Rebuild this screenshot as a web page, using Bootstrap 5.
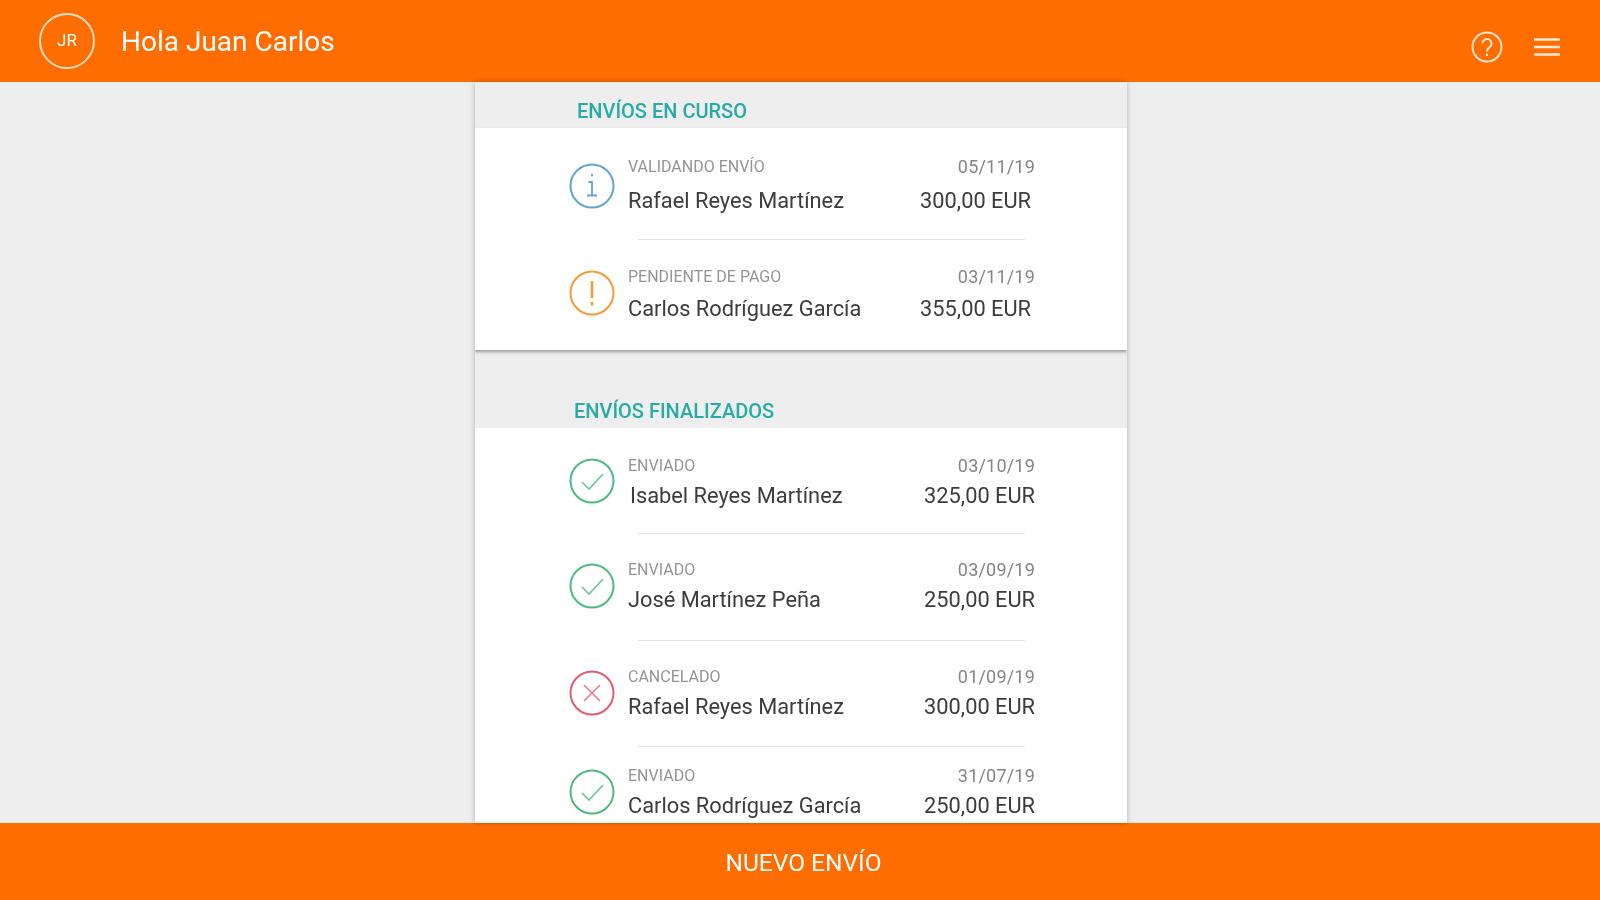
<!DOCTYPE html>
<html lang="es">
<head>
    <meta charset="UTF-8">
    <title>Envíos</title>
    <link href="https://cdn.jsdelivr.net/npm/bootstrap@5.3.0/dist/css/bootstrap.min.css" rel="stylesheet">
    <style>
        body { height: 100vh; overflow: hidden; background: #eeeeee; font-family: Roboto, "Liberation Sans", sans-serif; color: #3c3c3c; }
        .avatar, .hello, .top-icons, .panel, .bottom-text { filter: blur(.6px); }
        .top-bar { height: 82px; background: #ff6d00; color: #fff; padding: 0 40px 0 39px; }
        .avatar { width: 56px; height: 56px; border: 2px solid #ffdcc2; border-radius: 50%; font-size: 17px; margin-right: 26px; }
        .hello { font-size: 28px; padding-top: 1px; }
        .top-icons { gap: 31px; padding-top: 12px; }
        .panel { width: 652px; min-height: 0; margin-left: 475px; background: #eeeeee; box-shadow: 0 0 5px rgba(0, 0, 0, .28); }
        .sec-title { height: 46px; color: #26aca4; font-size: 20px; font-weight: 500; padding: 14px 0 0 102px; }
        .sec-title-2 { height: 78px; padding: 46px 0 0 99px; }
        .sec-card { background: #fff; }
        .sec-card-1 { box-shadow: 0 2px 3px rgba(0, 0, 0, .35); }
        .ship-row { padding: 0 92px 0 94px; }
        .ship-h1 { height: 111px; padding-top: 4px; }
        .ship-h2 { height: 110px; }
        .ship-h3 { height: 106px; }
        .ship-h4 { height: 105px; }
        .ship-h5 { height: 92px; }
        .ship-sep { height: 1px; background: #e0e0e0; margin: 0 102px 0 163px; }
        .ship-label { font-size: 16px; color: #949494; line-height: 18px; }
        .ship-date { font-size: 18px; color: #858585; line-height: 20px; letter-spacing: .2px; }
        .ship-name { font-size: 21.8px; line-height: 28px; margin-top: 6px; }
        .ship-name-wide { margin-top: 10px; }
        .ship-name-mid { margin-top: 8px; }
        .ship-name-in { padding-left: 2px; }
        .ship-text-low { padding-top: 4px; }
        .status-icon { width: 46px; height: 46px; margin-right: 13px; }
        .status-up { margin-bottom: 4px; }
        .status-up-sm { margin-bottom: 2px; }
        .bottom-bar { height: 77px; background: #ff6d00; color: #fff; font-size: 24.5px; padding: 3px 0 0 7px; }
    </style>
</head>
<body class="d-flex flex-column">

<svg width="0" height="0" class="position-absolute">
    <symbol id="i-ok" viewBox="0 0 46 46"><circle cx="23" cy="23" r="21.5" fill="none" stroke="#4dbb7f" stroke-width="2"/><path d="M13 24l7 7 14-15" fill="none" stroke="#6cc796" stroke-width="1.6"/></symbol>
    <symbol id="i-no" viewBox="0 0 46 46"><circle cx="23" cy="23" r="21.5" fill="none" stroke="#e8596b" stroke-width="2"/><path d="M15 15l16 16M31 15l-16 16" fill="none" stroke="#ee7c8a" stroke-width="1.6"/></symbol>
    <symbol id="i-info" viewBox="0 0 46 46"><circle cx="23" cy="23" r="21.5" fill="none" stroke="#5fa6cb" stroke-width="2"/><path d="M19.500 19h3.500v13M18 32.500h10M23 11v2.500" fill="none" stroke="#5fa6cb" stroke-width="1.800"/></symbol>
    <symbol id="i-warn" viewBox="0 0 46 46"><circle cx="23" cy="23" r="21.5" fill="none" stroke="#f59a35" stroke-width="2"/><path d="M23 11v17M23 32v3.500" fill="none" stroke="#f59a35" stroke-width="2.600"/></symbol>
</svg>

<header class="top-bar d-flex align-items-center flex-shrink-0">
    <div class="avatar d-flex align-items-center justify-content-center">JR</div>
    <div class="hello">Hola Juan Carlos</div>
    <div class="top-icons d-flex align-items-center ms-auto">
        <svg width="32" height="32" viewBox="0 0 32 32" fill="none" stroke="#ffe3cf" stroke-width="2"><circle cx="16" cy="16" r="14.500"/><path d="M11.500 12.500a4.500 4.500 0 1 1 7 3.700c-1.700 1.200-2.500 2-2.500 4.300M16 22.500v2.500"/></svg>
        <svg width="26" height="20" viewBox="0 0 26 20" fill="none" stroke="#ffe9da" stroke-width="2.600"><path d="M0 2.500h26M0 10h26M0 17.500h26"/></svg>
    </div>
</header>

<main class="panel me-auto flex-grow-1 overflow-hidden">
    <div class="sec-title">ENVÍOS EN CURSO</div>
    <div class="sec-card sec-card-1">
        <div class="ship-row ship-h1 d-flex align-items-center">
            <svg class="status-icon"><use href="#i-info"/></svg>
            <div class="flex-grow-1">
                <div class="d-flex justify-content-between align-items-center"><span class="ship-label">VALIDANDO ENVÍO</span><span class="ship-date">05/11/19</span></div>
                <div class="d-flex justify-content-between ship-name ship-name-wide"><span>Rafael Reyes Martínez</span><span class="pe-1">300,00 EUR</span></div>
            </div>
        </div>
        <div class="ship-sep"></div>
        <div class="ship-row ship-h2 d-flex align-items-center">
            <svg class="status-icon status-up"><use href="#i-warn"/></svg>
            <div class="flex-grow-1">
                <div class="d-flex justify-content-between align-items-center"><span class="ship-label">PENDIENTE DE PAGO</span><span class="ship-date">03/11/19</span></div>
                <div class="d-flex justify-content-between ship-name ship-name-mid"><span>Carlos Rodríguez García</span><span class="pe-1">355,00 EUR</span></div>
            </div>
        </div>
    </div>
    <div class="sec-title sec-title-2">ENVÍOS FINALIZADOS</div>
    <div class="sec-card">
        <div class="ship-row ship-h4 d-flex align-items-center">
            <svg class="status-icon"><use href="#i-ok"/></svg>
            <div class="flex-grow-1 ship-text-low">
                <div class="d-flex justify-content-between align-items-center"><span class="ship-label">ENVIADO</span><span class="ship-date">03/10/19</span></div>
                <div class="d-flex justify-content-between ship-name"><span class="ship-name-in">Isabel Reyes Martínez</span><span>325,00 EUR</span></div>
            </div>
        </div>
        <div class="ship-sep"></div>
        <div class="ship-row ship-h3 d-flex align-items-center">
            <svg class="status-icon status-up-sm"><use href="#i-ok"/></svg>
            <div class="flex-grow-1">
                <div class="d-flex justify-content-between align-items-center"><span class="ship-label">ENVIADO</span><span class="ship-date">03/09/19</span></div>
                <div class="d-flex justify-content-between ship-name"><span>José Martínez Peña</span><span>250,00 EUR</span></div>
            </div>
        </div>
        <div class="ship-sep"></div>
        <div class="ship-row ship-h4 d-flex align-items-center">
            <svg class="status-icon status-up-sm"><use href="#i-no"/></svg>
            <div class="flex-grow-1">
                <div class="d-flex justify-content-between align-items-center"><span class="ship-label">CANCELADO</span><span class="ship-date">01/09/19</span></div>
                <div class="d-flex justify-content-between ship-name"><span>Rafael Reyes Martínez</span><span>300,00 EUR</span></div>
            </div>
        </div>
        <div class="ship-sep"></div>
        <div class="ship-row ship-h5 d-flex align-items-center">
            <svg class="status-icon status-up-sm"><use href="#i-ok"/></svg>
            <div class="flex-grow-1">
                <div class="d-flex justify-content-between align-items-center"><span class="ship-label">ENVIADO</span><span class="ship-date">31/07/19</span></div>
                <div class="d-flex justify-content-between ship-name"><span>Carlos Rodríguez García</span><span>250,00 EUR</span></div>
            </div>
        </div>
    </div>
</main>

<footer class="bottom-bar d-flex align-items-center justify-content-center flex-shrink-0"><span class="bottom-text">NUEVO ENVÍO</span></footer>

</body>
</html>
